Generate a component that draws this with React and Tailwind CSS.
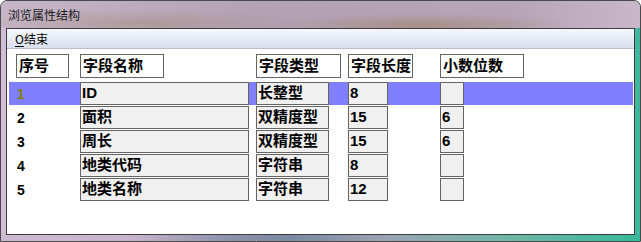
import React from 'react';

const headers = [
  { label: '序号', w: 'w-[53px]', ml: 'ml-[9px]' },
  { label: '字段名称', w: 'w-[84px]', ml: 'ml-[11px]' },
  { label: '字段类型', w: 'w-[85px]', ml: 'ml-[92px]' },
  { label: '字段长度', w: 'w-[65px]', ml: 'ml-[7px]' },
  { label: '小数位数', w: 'w-[84px]', ml: 'ml-[27px]' },
];

const rows = [
  { no: '1', name: 'ID', type: '长整型', len: '8', dec: '' },
  { no: '2', name: '面积', type: '双精度型', len: '15', dec: '6' },
  { no: '3', name: '周长', type: '双精度型', len: '15', dec: '6' },
  { no: '4', name: '地类代码', type: '字符串', len: '8', dec: '' },
  { no: '5', name: '地类名称', type: '字符串', len: '12', dec: '' },
];

const font = "font-['Liberation_Sans','Noto_Sans_CJK_SC',sans-serif]";

// grey edit-like cell
const Cell = ({ w, ml, children }) => (
  <div className={`${w} ${ml} h-[23px] shrink-0 border border-[#646464] bg-[#f0f0f0] pl-[1px] text-[15px] font-bold leading-[19px] text-black overflow-hidden whitespace-nowrap`}>
    {children}
  </div>
);

const App = () => {
  return (
    <div className={`w-[641px] h-[242px] overflow-hidden ${font}`}>
      <div className="relative w-[641px] h-[242px] rounded-t-[7px] border border-[#4a4a4a] bg-[linear-gradient(to_right,#d2bfd5_0%,#c2b0c5_30%,#b8a6bb_60%,#8fb3ad_93%,#3cb79d_100%)]">
        {/* title bar */}
        <div className="h-[27px] flex items-center pl-[7px] rounded-t-[6px] bg-[radial-gradient(ellipse_160px_14px_at_140px_22px,rgba(150,120,90,0.35),transparent),radial-gradient(ellipse_150px_12px_at_420px_24px,rgba(150,115,80,0.45),transparent),linear-gradient(to_right,#c6b6c8,#b3a2b4_40%,#b6a5b7_80%,#c8b7c8)]">
          <span className="text-[12px] leading-[14px] text-[#1b1b1b] font-['Noto_Sans_CJK_SC',sans-serif] mt-[1px]">浏览属性结构</span>
        </div>

        {/* client area */}
        <div className="ml-[5px] w-[629px] h-[207px] border border-[#3c3c3c] bg-white flex flex-col">
          {/* menu bar */}
          <div className="h-[20px] shrink-0 flex items-center pl-[8px] border-b border-[#b7bfcf] bg-[linear-gradient(to_bottom,#f6f8fc,#e6ebf5_50%,#d9e0ee)]">
            <span className="text-[12px] leading-[14px] text-black font-['Noto_Sans_CJK_SC',sans-serif]">
              <span className="underline underline-offset-2">O</span>结束
            </span>
          </div>

          {/* header row */}
          <div className="flex mt-[5px]">
            {headers.map((h) => (
              <div
                key={h.label}
                className={`${h.w} ${h.ml} h-[24px] shrink-0 border border-[#646464] bg-white pl-[2px] pt-[1px] text-[15px] font-bold leading-[19px] text-black whitespace-nowrap`}
              >
                {h.label}
              </div>
            ))}
          </div>

          {/* data rows */}
          <div className="flex flex-col gap-[1px] mt-[4px]">
            {rows.map((r, i) => (
              <div
                key={r.no}
                className={`flex h-[23px] ml-[2px] mr-[1px] ${i === 0 ? 'bg-[#8080ff]' : ''}`}
              >
                <div className={`w-[71px] shrink-0 pl-[8px] pt-[4px] text-[14px] font-bold leading-[16px] ${i === 0 ? 'text-[#808000]' : 'text-black'}`}>
                  {r.no}
                </div>
                <Cell w="w-[169px]" ml="ml-0">{r.name}</Cell>
                <Cell w="w-[73px]" ml="ml-[7px]">{r.type}</Cell>
                <Cell w="w-[40px]" ml="ml-[19px]">{r.len}</Cell>
                <Cell w="w-[24px]" ml="ml-[52px]">{r.dec}</Cell>
              </div>
            ))}
          </div>
        </div>

        {/* bottom frame tint */}
        <div className="absolute left-0 right-0 bottom-0 h-[6px] bg-[linear-gradient(to_right,#cdb9d1_0%,#c8b4cc_20%,#8d93ab_35%,#7a89a0_45%,#9aa3b3_60%,#6fb6a5_80%,#35b99b_100%)]" />
      </div>
    </div>
  );
};

export default App;
